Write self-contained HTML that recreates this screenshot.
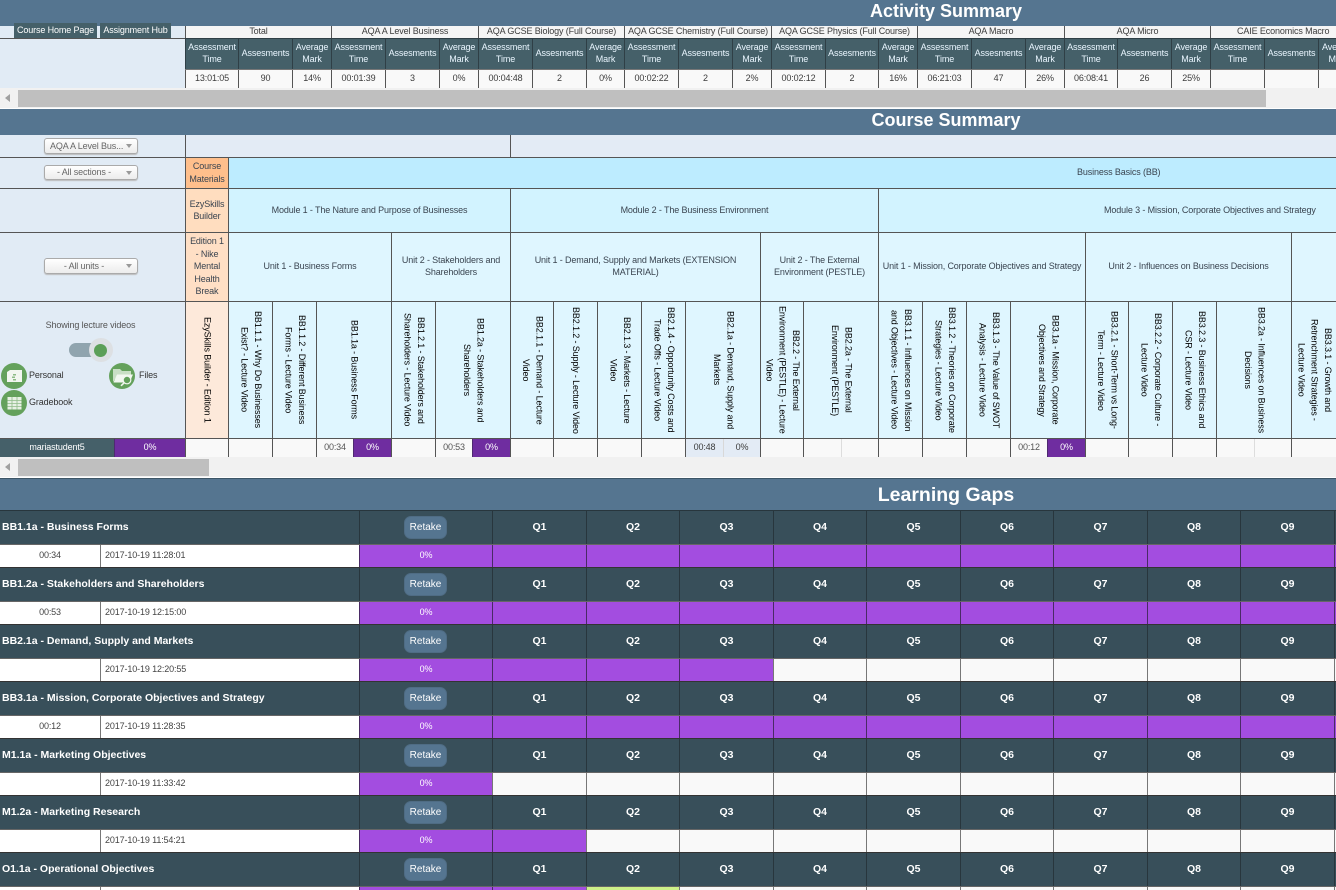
<!DOCTYPE html>
<html><head><meta charset="utf-8"><title>Activity Summary</title>
<style>
html,body{margin:0;padding:0;width:1336px;height:890px;overflow:hidden;background:#fff}
body{position:relative;font-family:"Liberation Sans",Arial,sans-serif;font-size:9px;letter-spacing:-.13px;color:#3c3c3c}
div{box-sizing:border-box}
.a{position:absolute}
.t{position:absolute;left:0;width:1336px;background:#557590;color:#fff;font-weight:bold;font-size:18px;letter-spacing:0}
.t span{position:absolute;left:0;width:1892px;text-align:center;white-space:nowrap}
.r{position:absolute;left:0;width:1336px;overflow:hidden}
.c{position:absolute;top:0;height:100%;display:flex;align-items:center;justify-content:center;text-align:center;overflow:hidden;border-left:1px solid #555;line-height:12px}
.up .c{padding-bottom:2px}
.up1 .c{padding-bottom:1px}
.h .c{background:#456069;color:#eaf6ff;border-left:1px solid #2f3f46}
.v{writing-mode:vertical-rl;color:#000;line-height:13.4px;white-space:nowrap}
.leaf .c{background:#dff6ff}
.sb{position:absolute;left:0;width:1336px;height:20px;background:#f1f1f1}
.sb i{position:absolute;left:5px;top:6px;width:0;height:0;border-top:4.5px solid transparent;border-bottom:4.5px solid transparent;border-right:5px solid #a0a0a0}
.sb b{position:absolute;left:18px;top:2px;height:17px;background:#bfbfbf}
.dd{position:absolute;left:44px;width:94px;height:16px;border:1px solid #aaa;border-radius:3px;background:linear-gradient(#fff,#ececec);box-shadow:0 1px 1px #bbb;color:#666;line-height:14px;padding-left:5px}
.dd i{position:absolute;left:81px;top:5px;width:0;height:0;border-left:3px solid transparent;border-right:3px solid transparent;border-top:4px solid #999}
.p{background:#6f2da0!important;color:#fff;border-left-color:#4e2a70}
.m{color:#555;background:#f9f9f9}
.lh,.ld{position:absolute;left:0;width:1336px}
.lh{height:34px;background:#384f5a;color:#fff;font-weight:bold;font-size:10.5px;letter-spacing:0;border-bottom:1px solid #666}
.ld{height:23px;background:#f9f9f9;border-bottom:1px solid #333;color:#444}
.lh .c{border-left:1px solid #28363d;padding-bottom:1px}
.ld .c{border-left:1px solid #777;padding-bottom:2px}
.n{position:absolute;left:2px;top:0;height:32px;line-height:32px;white-space:nowrap}
.bt{position:absolute;left:404px;top:5px;width:43px;height:23px;border-radius:7px;background:#557590;border:1px solid #4f6c84;font-size:10px;font-weight:normal;line-height:21px;text-align:center;color:#fff}
.u{background:#a34de0!important;color:#fff;border-left-color:#4a2a66!important}
.q1{left:492px;width:94px}.q2{left:586px;width:93px}.q3{left:679px;width:94px}.q4{left:773px;width:93px}.q5{left:866px;width:94px}.q6{left:960px;width:93px}.q7{left:1053px;width:94px}.q8{left:1147px;width:93px}.q9{left:1240px;width:94px}.q0{left:1334px;width:2px}
.ic{position:absolute;width:26px;height:26px}
.lb{position:absolute;color:#333;line-height:12px;white-space:nowrap}
.cs{color:#3a4450}
</style></head><body>

<div class="t" style="top:0;height:26px"><span style="top:0;line-height:23px">Activity Summary</span></div>

<div class="a" style="left:0;top:26px;width:185px;height:62px;background:#e1ebf5"></div>
<div class="a" style="left:0;top:38px;width:185px;height:1px;background:#555"></div>
<div class="a" style="left:14px;top:23px;width:83px;height:15px;background:#456069;color:#fff;line-height:15px;text-align:center;white-space:nowrap">Course Home Page</div>
<div class="a" style="left:100px;top:23px;width:71px;height:15px;background:#456069;color:#fff;line-height:15px;text-align:center;white-space:nowrap">Assignment Hub</div>

<div class="r up" style="top:26px;height:12px;background:#f5f5f5;left:185px;width:1151px">
<div class="c" style="left:0;width:146px">Total</div>
<div class="c" style="left:146px;width:147px">AQA A Level Business</div>
<div class="c" style="left:293px;width:146px;white-space:nowrap">AQA GCSE Biology (Full Course)</div>
<div class="c" style="left:439px;width:147px;white-space:nowrap">AQA GCSE Chemistry (Full Course)</div>
<div class="c" style="left:586px;width:146px;white-space:nowrap">AQA GCSE Physics (Full Course)</div>
<div class="c" style="left:732px;width:147px">AQA Macro</div>
<div class="c" style="left:879px;width:146px">AQA Micro</div>
<div class="c" style="left:1025px;width:126px;white-space:nowrap;justify-content:flex-start;padding-left:26px">CAIE Economics Macro</div>
</div>

<div class="r h up" style="top:38px;height:31px;border-top:1px solid #2f3f46;background:#456069;left:185px;width:1151px">
<div class="c" style="left:0;width:53px">Assessment<br>Time</div><div class="c" style="left:53px;width:54px">Assesments</div><div class="c" style="left:107px;width:39px">Average<br>Mark</div>
<div class="c" style="left:146px;width:54px">Assessment<br>Time</div><div class="c" style="left:200px;width:54px">Assesments</div><div class="c" style="left:254px;width:39px">Average<br>Mark</div>
<div class="c" style="left:293px;width:54px">Assessment<br>Time</div><div class="c" style="left:347px;width:54px">Assesments</div><div class="c" style="left:401px;width:38px">Average<br>Mark</div>
<div class="c" style="left:439px;width:54px">Assessment<br>Time</div><div class="c" style="left:493px;width:54px">Assesments</div><div class="c" style="left:547px;width:39px">Average<br>Mark</div>
<div class="c" style="left:586px;width:54px">Assessment<br>Time</div><div class="c" style="left:640px;width:53px">Assesments</div><div class="c" style="left:693px;width:39px">Average<br>Mark</div>
<div class="c" style="left:732px;width:54px">Assessment<br>Time</div><div class="c" style="left:786px;width:54px">Assesments</div><div class="c" style="left:840px;width:39px">Average<br>Mark</div>
<div class="c" style="left:879px;width:53px">Assessment<br>Time</div><div class="c" style="left:932px;width:54px">Assesments</div><div class="c" style="left:986px;width:39px">Average<br>Mark</div>
<div class="c" style="left:1025px;width:54px">Assessment<br>Time</div><div class="c" style="left:1079px;width:54px">Assesments</div><div class="c" style="left:1133px;width:39px;justify-content:flex-start;padding-left:3px">Average<br>Mark</div>
</div>
<div class="a" style="left:185px;top:69px;width:1151px;height:1px;background:#777"></div>

<div class="r up" style="top:70px;height:18px;background:#f9f9f9;left:185px;width:1151px">
<div class="c" style="left:0;width:53px">13:01:05</div><div class="c" style="left:53px;width:54px">90</div><div class="c" style="left:107px;width:39px">14%</div>
<div class="c" style="left:146px;width:54px">00:01:39</div><div class="c" style="left:200px;width:54px">3</div><div class="c" style="left:254px;width:39px">0%</div>
<div class="c" style="left:293px;width:54px">00:04:48</div><div class="c" style="left:347px;width:54px">2</div><div class="c" style="left:401px;width:38px">0%</div>
<div class="c" style="left:439px;width:54px">00:02:22</div><div class="c" style="left:493px;width:54px">2</div><div class="c" style="left:547px;width:39px">2%</div>
<div class="c" style="left:586px;width:54px">00:02:12</div><div class="c" style="left:640px;width:53px">2</div><div class="c" style="left:693px;width:39px">16%</div>
<div class="c" style="left:732px;width:54px">06:21:03</div><div class="c" style="left:786px;width:54px">47</div><div class="c" style="left:840px;width:39px">26%</div>
<div class="c" style="left:879px;width:53px">06:08:41</div><div class="c" style="left:932px;width:54px">26</div><div class="c" style="left:986px;width:39px">25%</div>
<div class="c" style="left:1025px;width:54px"></div><div class="c" style="left:1079px;width:54px"></div><div class="c" style="left:1133px;width:18px"></div>
</div>

<div class="sb" style="top:88px"><i></i><b style="width:1248px"></b></div>

<div class="t" style="top:109px;height:26px"><span style="top:0;line-height:22px">Course Summary</span></div>

<!-- left panel -->
<div class="a" style="left:0;top:135px;width:185px;height:303px;background:#e1ebf5"></div>
<div class="r" style="top:135px;height:22px;left:185px;width:1151px;background:#e3ebf5">
<div class="c" style="left:0;width:325px"></div><div class="c" style="left:325px;width:826px"></div></div>
<div class="dd" style="top:138px">AQA A Level Bus...<i></i></div>

<div class="a" style="left:0;top:157px;width:1336px;height:1px;background:#555;z-index:3"></div>
<div class="a" style="left:0;top:188px;width:1336px;height:1px;background:#555;z-index:3"></div>
<div class="a" style="left:0;top:232px;width:1336px;height:1px;background:#555;z-index:3"></div>
<div class="a" style="left:0;top:301px;width:1336px;height:1px;background:#555;z-index:3"></div>

<div class="dd" style="top:165px;height:15px;line-height:13px;text-align:center;padding:0 14px 0 0">- All sections -<i></i></div>
<div class="dd" style="top:258px;text-align:center;padding:0 14px 0 0">- All units -<i></i></div>

<div class="r cs" style="top:157px;height:31px;left:185px;width:1151px;background:#bdecff">
<div class="c" style="left:0;width:43px;background:#ffbf8c;line-height:13px">Course<br>Materials</div>
<div class="a" style="left:43px;top:0;width:1108px;height:100%;border-left:1px solid #555"></div>
<div class="a" style="left:892px;top:9px;line-height:12px;white-space:nowrap">Business Basics (BB)</div>
</div>

<div class="r cs" style="top:188px;height:44px;left:185px;width:1151px;background:#d2f3ff">
<div class="c" style="left:0;width:43px;background:#ffddbf">EzySkills<br>Builder</div>
<div class="c" style="left:43px;width:282px">Module 1 - The Nature and Purpose of Businesses</div>
<div class="c" style="left:325px;width:368px">Module 2 - The Business Environment</div>
<div class="c" style="left:693px;width:458px;justify-content:flex-start;padding-left:225px;white-space:nowrap">Module 3 - Mission, Corporate Objectives and Strategy</div>
</div>

<div class="r cs up1" style="top:232px;height:69px;left:185px;width:1151px;background:#dff6ff">
<div class="c" style="left:0;width:43px;background:#ffdfc5;line-height:12.6px;padding-bottom:0">Edition 1<br>- Nike<br>Mental<br>Health<br>Break</div>
<div class="c" style="left:43px;width:163px">Unit 1 - Business Forms</div>
<div class="c" style="left:206px;width:119px;padding:0 8px 1px">Unit 2 - Stakeholders and<br>Shareholders</div>
<div class="c" style="left:325px;width:250px">Unit 1 - Demand, Supply and Markets (EXTENSION<br>MATERIAL)</div>
<div class="c" style="left:575px;width:118px">Unit 2 - The External<br>Environment (PESTLE)</div>
<div class="c" style="left:693px;width:207px;white-space:nowrap">Unit 1 - Mission, Corporate Objectives and Strategy</div>
<div class="c" style="left:900px;width:206px;white-space:nowrap">Unit 2 - Influences on Business Decisions</div>
<div class="c" style="left:1106px;width:45px"></div>
</div>

<!-- leaf row -->
<div class="r leaf" style="top:302px;height:136px;left:185px;width:1151px">
<div class="c" style="left:0;width:43px;background:#fde9da"><div class="v">EzySkills Builder - Edition 1</div></div>
<div class="c" style="left:43px;width:44px"><div class="v">BB1.1.1 - Why Do Businesses<br>Exist? - Lecture Video</div></div>
<div class="c" style="left:87px;width:44px"><div class="v">BB1.1.2 - Different Business<br>Forms - Lecture Video</div></div>
<div class="c" style="left:131px;width:75px"><div class="v">BB1.1a - Business Forms</div></div>
<div class="c" style="left:206px;width:44px"><div class="v">BB1.2.1 - Stakeholders and<br>Shareholders - Lecture Video</div></div>
<div class="c" style="left:250px;width:75px"><div class="v">BB1.2a - Stakeholders and<br>Shareholders</div></div>
<div class="c" style="left:325px;width:43px"><div class="v">BB2.1.1 - Demand - Lecture<br>Video</div></div>
<div class="c" style="left:368px;width:44px"><div class="v">BB2.1.2 - Supply - Lecture Video</div></div>
<div class="c" style="left:412px;width:44px"><div class="v">BB2.1.3 - Markets - Lecture<br>Video</div></div>
<div class="c" style="left:456px;width:44px"><div class="v">BB2.1.4 - Opportunity Costs and<br>Trade Offs - Lecture Video</div></div>
<div class="c" style="left:500px;width:75px"><div class="v">BB2.1a - Demand, Supply and<br>Markets</div></div>
<div class="c" style="left:575px;width:43px"><div class="v">BB2.2 - The External<br>Environment (PESTLE) - Lecture<br>Video</div></div>
<div class="c" style="left:618px;width:75px"><div class="v">BB2.2a - The External<br>Environment (PESTLE)</div></div>
<div class="c" style="left:693px;width:44px"><div class="v">BB3.1.1 - Influences on Mission<br>and Objectives - Lecture Video</div></div>
<div class="c" style="left:737px;width:44px"><div class="v">BB3.1.2 - Theories on Corporate<br>Strategies - Lecture Video</div></div>
<div class="c" style="left:781px;width:44px"><div class="v">BB3.1.3 - The Value of SWOT<br>Analysis - Lecture Video</div></div>
<div class="c" style="left:825px;width:75px"><div class="v">BB3.1a - Mission, Corporate<br>Objectives and Strategy</div></div>
<div class="c" style="left:900px;width:43px"><div class="v">BB3.2.1 - Short-Term vs Long-<br>Term - Lecture Video</div></div>
<div class="c" style="left:943px;width:44px"><div class="v">BB3.2.2 - Corporate Culture -<br>Lecture Video</div></div>
<div class="c" style="left:987px;width:44px"><div class="v">BB3.2.3 - Business Ethics and<br>CSR - Lecture Video</div></div>
<div class="c" style="left:1031px;width:75px"><div class="v">BB3.2a - Influences on Business<br>Decisions</div></div>
<div class="c" style="left:1106px;width:45px"><div class="v">BB3.3.1 - Growth and<br>Retrenchment Strategies -<br>Lecture Video</div></div>
</div>
<div class="a" style="left:0;top:438px;width:1336px;height:1px;background:#555;z-index:3"></div>

<div class="lb" style="left:0;width:181px;top:319px;text-align:center;color:#555">Showing lecture videos</div>
<div class="a" style="left:69px;top:343px;width:31px;height:14px;border-radius:7px;background:#90a4ae"></div>
<div class="a" style="left:89px;top:338px;width:24px;height:24px;border-radius:50%;background:#dde0e3"></div>
<div class="a" style="left:94px;top:343.5px;width:13px;height:13px;border-radius:50%;background:#5c9f57"></div>

<svg class="ic" style="left:1px;top:363px" viewBox="0 0 26 26"><circle cx="13" cy="13" r="13" fill="#64a15c"/><path d="M6 19V9l3-2h12v12z" fill="#f2f6f0"/><path d="M12 11h3v1.5h-3zM11 13.5h3V15h-3zM12 16h3v1.5h-3z" fill="#8dbb86"/></svg>
<svg class="ic" style="left:1px;top:390px" viewBox="0 0 26 26"><circle cx="13" cy="13" r="13" fill="#64a15c"/><path d="M6.5 7h14v12.5h-14z" fill="#e6f0e3"/><path d="M6.5 10.5h14M6.5 13.5h14M6.5 16.5h14M11 7v12.5M16 7v12.5" stroke="#8fbb89" stroke-width=".8" fill="none"/></svg>
<svg class="ic" style="left:109px;top:363px" viewBox="0 0 26 26"><circle cx="13" cy="13" r="13" fill="#64a15c"/><path d="M4 19V6h7l2 2h9v4H9z" fill="#c9dfc5"/><path d="M4.500 19.500l3.500-8h16l-3.500 8z" fill="#f2f7f0"/><circle cx="18" cy="17" r="3.800" fill="#64a15c" stroke="#f2f7f0" stroke-width="1.200"/><path d="M15.300 19.700L12 22.800" stroke="#f2f7f0" stroke-width="1.600"/></svg>
<div class="lb" style="left:29px;top:369px">Personal</div>
<div class="lb" style="left:29px;top:396px">Gradebook</div>
<div class="lb" style="left:139px;top:369px">Files</div>

<!-- data row -->
<div class="r up" style="top:439px;height:18px;background:#f9f9f9;left:0">
<div class="a" style="left:0;top:0;width:114px;height:18px;background:#456069;color:#fff;line-height:16px;text-align:center">mariastudent5</div>
<div class="c p" style="left:114px;width:71px">0%</div>
<div class="c" style="left:185px;width:43px"></div><div class="c" style="left:228px;width:44px"></div><div class="c" style="left:272px;width:44px"></div>
<div class="c m" style="left:316px;width:37px">00:34</div><div class="c p" style="left:353px;width:38px">0%</div>
<div class="c" style="left:391px;width:44px"></div>
<div class="c m" style="left:435px;width:37px">00:53</div><div class="c p" style="left:472px;width:38px">0%</div>
<div class="c" style="left:510px;width:43px"></div><div class="c" style="left:553px;width:44px"></div><div class="c" style="left:597px;width:44px"></div><div class="c" style="left:641px;width:44px"></div>
<div class="c" style="left:685px;width:38px;background:#e3ebf5">00:48</div><div class="c" style="left:723px;width:37px;background:#e3ebf5;border-left-color:#d8d8d8">0%</div>
<div class="c" style="left:760px;width:43px"></div><div class="c" style="left:803px;width:38px"></div><div class="c" style="left:841px;width:37px;border-left-color:#ddd"></div>
<div class="c" style="left:878px;width:44px"></div><div class="c" style="left:922px;width:44px"></div><div class="c" style="left:966px;width:44px"></div>
<div class="c m" style="left:1010px;width:37px">00:12</div><div class="c p" style="left:1047px;width:38px">0%</div>
<div class="c" style="left:1085px;width:43px"></div><div class="c" style="left:1128px;width:44px"></div><div class="c" style="left:1172px;width:44px"></div><div class="c" style="left:1216px;width:38px"></div><div class="c" style="left:1254px;width:37px;border-left-color:#ddd"></div><div class="c" style="left:1291px;width:45px"></div>
</div>

<div class="sb" style="top:457px"><i></i><b style="width:191px"></b></div>
<div class="a" style="left:0;top:478px;width:1336px;height:1px;background:#3d5566"></div>

<div class="t" style="top:479px;height:31px;font-size:19.5px"><span style="top:0;line-height:32px">Learning Gaps</span></div>
<div class="a" style="left:0;top:510px;width:1336px;height:1px;background:#28363d"></div>

<!-- LG 1 -->
<div class="lh" style="top:511px"><div class="n">BB1.1a - Business Forms</div><div class="c" style="left:359px;width:133px"></div><div class="bt">Retake</div><div class="c q1">Q1</div><div class="c q2">Q2</div><div class="c q3">Q3</div><div class="c q4">Q4</div><div class="c q5">Q5</div><div class="c q6">Q6</div><div class="c q7">Q7</div><div class="c q8">Q8</div><div class="c q9">Q9</div><div class="c q0"></div></div>
<div class="ld" style="top:545px"><div class="c" style="left:0;width:100px;background:#fff;border:0">00:34</div><div class="c" style="left:100px;width:259px;background:#fff;justify-content:flex-start;padding-left:4px">2017-10-19 11:28:01</div><div class="c u" style="left:359px;width:133px">0%</div><div class="c u q1"></div><div class="c u q2"></div><div class="c u q3"></div><div class="c u q4"></div><div class="c u q5"></div><div class="c u q6"></div><div class="c u q7"></div><div class="c u q8"></div><div class="c u q9"></div><div class="c u q0"></div></div>
<!-- LG 2 -->
<div class="lh" style="top:568px"><div class="n">BB1.2a - Stakeholders and Shareholders</div><div class="c" style="left:359px;width:133px"></div><div class="bt">Retake</div><div class="c q1">Q1</div><div class="c q2">Q2</div><div class="c q3">Q3</div><div class="c q4">Q4</div><div class="c q5">Q5</div><div class="c q6">Q6</div><div class="c q7">Q7</div><div class="c q8">Q8</div><div class="c q9">Q9</div><div class="c q0"></div></div>
<div class="ld" style="top:602px"><div class="c" style="left:0;width:100px;background:#fff;border:0">00:53</div><div class="c" style="left:100px;width:259px;background:#fff;justify-content:flex-start;padding-left:4px">2017-10-19 12:15:00</div><div class="c u" style="left:359px;width:133px">0%</div><div class="c u q1"></div><div class="c u q2"></div><div class="c u q3"></div><div class="c u q4"></div><div class="c u q5"></div><div class="c u q6"></div><div class="c u q7"></div><div class="c u q8"></div><div class="c u q9"></div><div class="c u q0"></div></div>
<!-- LG 3 -->
<div class="lh" style="top:625px"><div class="n">BB2.1a - Demand, Supply and Markets</div><div class="c" style="left:359px;width:133px"></div><div class="bt">Retake</div><div class="c q1">Q1</div><div class="c q2">Q2</div><div class="c q3">Q3</div><div class="c q4">Q4</div><div class="c q5">Q5</div><div class="c q6">Q6</div><div class="c q7">Q7</div><div class="c q8">Q8</div><div class="c q9">Q9</div><div class="c q0"></div></div>
<div class="ld" style="top:659px"><div class="c" style="left:0;width:100px;background:#fff;border:0"></div><div class="c" style="left:100px;width:259px;background:#fff;justify-content:flex-start;padding-left:4px">2017-10-19 12:20:55</div><div class="c u" style="left:359px;width:133px">0%</div><div class="c u q1"></div><div class="c u q2"></div><div class="c u q3"></div><div class="c q4"></div><div class="c q5"></div><div class="c q6"></div><div class="c q7"></div><div class="c q8"></div><div class="c q9"></div><div class="c q0"></div></div>
<!-- LG 4 -->
<div class="lh" style="top:682px"><div class="n">BB3.1a - Mission, Corporate Objectives and Strategy</div><div class="c" style="left:359px;width:133px"></div><div class="bt">Retake</div><div class="c q1">Q1</div><div class="c q2">Q2</div><div class="c q3">Q3</div><div class="c q4">Q4</div><div class="c q5">Q5</div><div class="c q6">Q6</div><div class="c q7">Q7</div><div class="c q8">Q8</div><div class="c q9">Q9</div><div class="c q0"></div></div>
<div class="ld" style="top:716px"><div class="c" style="left:0;width:100px;background:#fff;border:0">00:12</div><div class="c" style="left:100px;width:259px;background:#fff;justify-content:flex-start;padding-left:4px">2017-10-19 11:28:35</div><div class="c u" style="left:359px;width:133px">0%</div><div class="c u q1"></div><div class="c u q2"></div><div class="c u q3"></div><div class="c u q4"></div><div class="c u q5"></div><div class="c u q6"></div><div class="c u q7"></div><div class="c u q8"></div><div class="c u q9"></div><div class="c u q0"></div></div>
<!-- LG 5 -->
<div class="lh" style="top:739px"><div class="n">M1.1a - Marketing Objectives</div><div class="c" style="left:359px;width:133px"></div><div class="bt">Retake</div><div class="c q1">Q1</div><div class="c q2">Q2</div><div class="c q3">Q3</div><div class="c q4">Q4</div><div class="c q5">Q5</div><div class="c q6">Q6</div><div class="c q7">Q7</div><div class="c q8">Q8</div><div class="c q9">Q9</div><div class="c q0"></div></div>
<div class="ld" style="top:773px"><div class="c" style="left:0;width:100px;background:#fff;border:0"></div><div class="c" style="left:100px;width:259px;background:#fff;justify-content:flex-start;padding-left:4px">2017-10-19 11:33:42</div><div class="c u" style="left:359px;width:133px">0%</div><div class="c q1"></div><div class="c q2"></div><div class="c q3"></div><div class="c q4"></div><div class="c q5"></div><div class="c q6"></div><div class="c q7"></div><div class="c q8"></div><div class="c q9"></div><div class="c q0"></div></div>
<!-- LG 6 -->
<div class="lh" style="top:796px"><div class="n">M1.2a - Marketing Research</div><div class="c" style="left:359px;width:133px"></div><div class="bt">Retake</div><div class="c q1">Q1</div><div class="c q2">Q2</div><div class="c q3">Q3</div><div class="c q4">Q4</div><div class="c q5">Q5</div><div class="c q6">Q6</div><div class="c q7">Q7</div><div class="c q8">Q8</div><div class="c q9">Q9</div><div class="c q0"></div></div>
<div class="ld" style="top:830px"><div class="c" style="left:0;width:100px;background:#fff;border:0"></div><div class="c" style="left:100px;width:259px;background:#fff;justify-content:flex-start;padding-left:4px">2017-10-19 11:54:21</div><div class="c u" style="left:359px;width:133px">0%</div><div class="c u q1"></div><div class="c q2"></div><div class="c q3"></div><div class="c q4"></div><div class="c q5"></div><div class="c q6"></div><div class="c q7"></div><div class="c q8"></div><div class="c q9"></div><div class="c q0"></div></div>
<!-- LG 7 -->
<div class="lh" style="top:853px"><div class="n">O1.1a - Operational Objectives</div><div class="c" style="left:359px;width:133px"></div><div class="bt">Retake</div><div class="c q1">Q1</div><div class="c q2">Q2</div><div class="c q3">Q3</div><div class="c q4">Q4</div><div class="c q5">Q5</div><div class="c q6">Q6</div><div class="c q7">Q7</div><div class="c q8">Q8</div><div class="c q9">Q9</div><div class="c q0"></div></div>
<div class="ld" style="top:887px"><div class="c" style="left:0;width:100px;background:#fff;border:0"></div><div class="c" style="left:100px;width:259px;background:#fff"></div><div class="c u" style="left:359px;width:133px"></div><div class="c u q1"></div><div class="c q2" style="background:#cdf089"></div><div class="c q3"></div><div class="c q4"></div><div class="c q5"></div><div class="c q6"></div><div class="c q7"></div><div class="c q8"></div><div class="c q9"></div><div class="c q0"></div></div>

</body></html>
